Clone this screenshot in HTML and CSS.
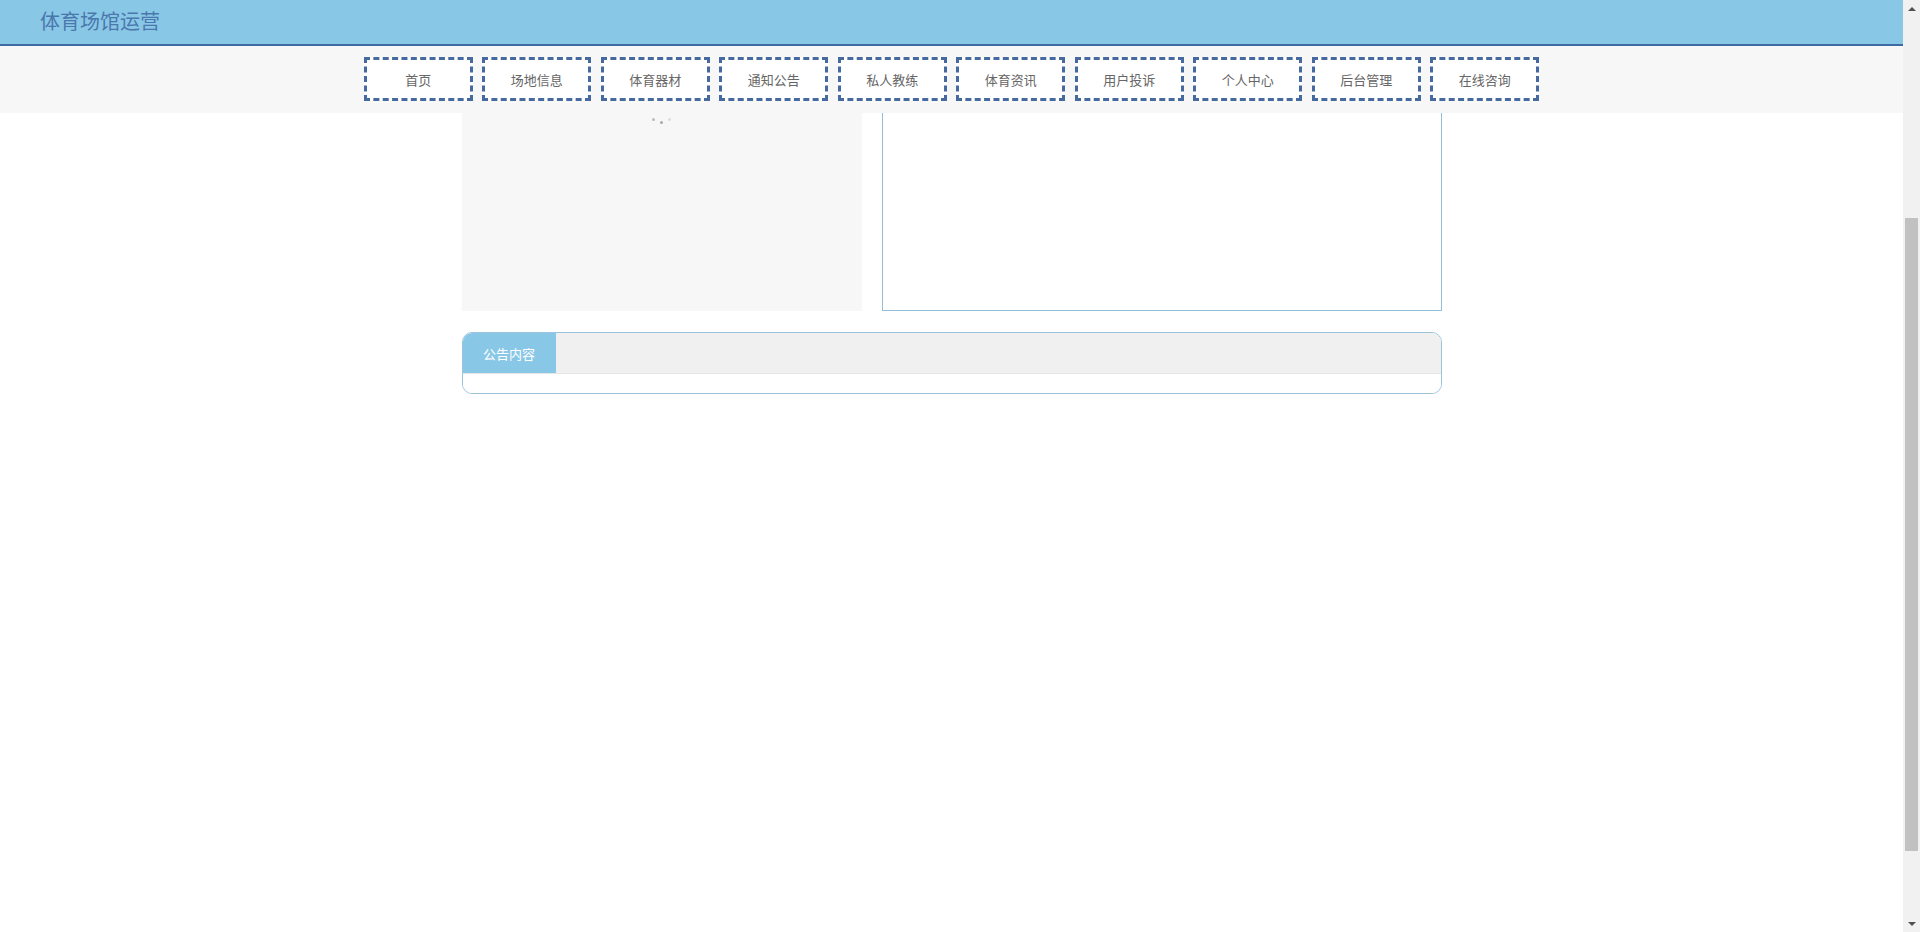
FILE: index.html
```html
<!DOCTYPE html>
<html lang="zh-CN">
<head>
  <meta charset="UTF-8"/>
  <meta name="viewport" content="width=device-width, initial-scale=1.0"/>
  <title>体育场馆运营</title>
  <link rel="stylesheet" href="styles.css">
</head>
<body>

<div class="topbar">
  <div class="brand">体育场馆运营</div>
</div>

<nav class="menu">
  <a class="menu-item" href="#">首页</a>
  <a class="menu-item" href="#">场地信息</a>
  <a class="menu-item" href="#">体育器材</a>
  <a class="menu-item" href="#">通知公告</a>
  <a class="menu-item" href="#">私人教练</a>
  <a class="menu-item" href="#">体育资讯</a>
  <a class="menu-item" href="#">用户投诉</a>
  <a class="menu-item" href="#">个人中心</a>
  <a class="menu-item" href="#">后台管理</a>
  <a class="menu-item" href="#">在线咨询</a>
</nav>

<main class="page">
  <div class="top-row">
    <div class="banner">
      <div class="loading"><span></span><span></span><span></span></div>
    </div>
    <div class="news-box"></div>
  </div>

  <div class="notice">
    <div class="notice-head">
      <span class="notice-tab">公告内容</span>
    </div>
    <div class="notice-body"></div>
  </div>
</main>

<!-- page scroll rail -->
<div class="rail">
  <div class="rail-btn up"></div>
  <div class="rail-track"><div class="rail-thumb"></div></div>
  <div class="rail-btn down"></div>
</div>

<script>
  // keep the reading position a bit down the page, below the banner top
  window.addEventListener('load', function () {
    window.scrollTo(0, 296);
  });
  window.scrollTo(0, 296);
</script>

</body>
</html>
```

FILE: styles.css
```css
body {
  margin: 0;
  padding-right: 17px;
  font-family: "Noto Sans CJK SC", "Microsoft YaHei", sans-serif;
  background-color: #fff;
  color: #666;
}

.topbar {
  position: fixed;
  top: 0;
  left: 0;
  right: 17px;
  height: 44px;
  background-color: #89c7e7;
  border-bottom: 2px solid #3e6aa4;
  z-index: 10;
}

.brand {
  padding-left: 40px;
  line-height: 42px;
  font-size: 20px;
  color: #4a77ac;
}

.menu {
  position: fixed;
  top: 46px;
  left: 0;
  right: 17px;
  height: 67px;
  padding-top: 11px;
  box-sizing: border-box;
  background-color: #f7f7f7;
  display: flex;
  justify-content: center;
  align-items: flex-start;
  gap: 9.5px;
  z-index: 10;
}

.menu-item {
  box-sizing: border-box;
  width: 109px;
  height: 44px;
  border: 3px dashed #46699f;
  background-color: #fff;
  display: flex;
  align-items: center;
  justify-content: center;
  font-size: 13px;
  color: #666;
  text-decoration: none;
}

.page {
  box-sizing: border-box;
  width: 980px;
  margin: 0 auto;
  padding-top: 132px;
  min-height: 1322px;
}

.top-row {
  display: flex;
  gap: 20px;
  height: 475px;
}

.banner {
  width: 400px;
  background-color: #f7f7f7;
  display: flex;
  justify-content: center;
  padding-top: 282px;
  box-sizing: border-box;
}

.loading {
  display: flex;
  gap: 5px;
  height: 8px;
}

.loading span {
  width: 3px;
  height: 3px;
  border-radius: 50%;
  background-color: #bbb;
}

.loading span:nth-child(2) {
  margin-top: 3px;
  background-color: #aaa;
}

.loading span:nth-child(3) {
  background-color: #ddd;
}

.news-box {
  flex: 1;
  box-sizing: border-box;
  border: 1px solid #93bdd8;
}

.notice {
  margin-top: 21px;
  border: 1px solid #9cc3dc;
  border-radius: 10px;
  overflow: hidden;
}

.notice-head {
  height: 40px;
  background-color: #f0f0f1;
  border-bottom: 1px solid #e4e6e8;
  display: flex;
}

.notice-tab {
  width: 93px;
  background-color: #89c7e7;
  color: #fff;
  font-size: 13px;
  display: flex;
  align-items: center;
  justify-content: center;
}

.notice-body {
  height: 19px;
  background-color: #fff;
}

/* scroll rail */
.rail {
  position: fixed;
  top: 0;
  right: 0;
  bottom: 0;
  width: 17px;
  background-color: #f1f1f1;
  display: flex;
  flex-direction: column;
  z-index: 20;
}

.rail-btn {
  height: 17px;
  display: flex;
  align-items: center;
  justify-content: center;
}

.rail-btn::before {
  content: "";
  border-left: 4px solid transparent;
  border-right: 4px solid transparent;
}

.rail-btn.up::before {
  border-bottom: 4px solid #505050;
}

.rail-btn.down::before {
  border-top: 4px solid #505050;
}

.rail-track {
  flex: 1;
  padding: 201px 2px 0;
}

.rail-thumb {
  height: 633px;
  background-color: #c1c1c1;
}
```
